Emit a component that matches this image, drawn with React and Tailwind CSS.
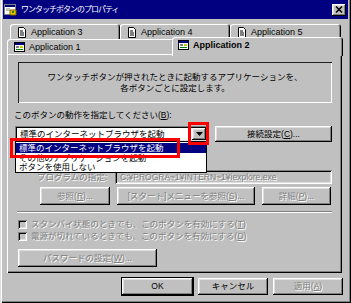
import React from 'react';

const jp = "font-['Liberation_Sans','Noto_Sans_CJK_JP',sans-serif]";
const raised = 'shadow-[inset_-1px_-1px_#000,inset_1px_1px_#fff,inset_-2px_-2px_#808080,inset_2px_2px_#dfdfdf]';
const sunken = 'shadow-[inset_1px_1px_#808080,inset_-1px_-1px_#fff,inset_2px_2px_#000,inset_-2px_-2px_#dfdfdf]';
const grayed = 'text-[#808080] [text-shadow:1px_1px_0_#fff]';

const PageIcon = () => (
  <svg width="10" height="11" viewBox="0 0 10 11" className="shrink-0">
    <path d="M1.5 0.5h5l2 2v8h-7z" fill="#fff" stroke="#000" />
    <path d="M3 4h3M3 6h4M3 8h4" stroke="#000" />
  </svg>
);

const AppIcon = () => (
  <svg width="11" height="10" viewBox="0 0 11 10" className="shrink-0">
    <rect x="0.5" y="0.5" width="10" height="9" fill="#fff" stroke="#000" />
    <rect x="1" y="1" width="9" height="2" fill="#000080" />
    <rect x="2" y="4" width="3" height="2" fill="#808080" />
    <rect x="6" y="4" width="3" height="2" fill="#c8c800" />
    <rect x="2" y="7" width="7" height="1" fill="#008000" />
  </svg>
);

const Key = ({ k }) => <span className="underline underline-offset-1">{k}</span>;

const Tab = ({ label, w, app, selected }) => (
  <div
    className={`${w} ${
      selected ? 'relative z-10 -mt-[2px] -mx-[2px] h-[19px] font-bold pl-[6px]' : 'h-[15px] pl-[7px]'
    } bg-[#c0c0c0] rounded-t-[3px] shadow-[inset_1px_1px_#fff,inset_-1px_0_#000,inset_-2px_0_#808080] flex items-start pt-[3px] gap-[4px] font-['Liberation_Sans',sans-serif] text-[9px] leading-[10px]`}
  >
    {app ? <AppIcon /> : <PageIcon />}
    <span>{label}</span>
  </div>
);

const Btn = ({ w, children, disabled, def }) => (
  <div
    className={`${w} h-full flex items-center justify-center ${raised} ${disabled ? grayed : ''} ${
      def ? 'outline outline-1 outline-black -outline-offset-0' : ''
    }`}
  >
    {children}
  </div>
);

export default function App() {
  return (
    <div
      className={`w-[351px] h-[303px] bg-[#c0c0c0] ${jp} text-[8.5px] text-black px-[3px] flex flex-col overflow-hidden shadow-[inset_1px_0_#dfdfdf,inset_2px_0_#fff,inset_-1px_-1px_#000,inset_-2px_-2px_#808080]`}
    >
      {/* title bar */}
      <div className="h-[19px] bg-[#000080] flex items-center pl-[1px] pr-[2px] shrink-0">
        <svg width="13" height="12" viewBox="0 0 13 12" className="shrink-0">
          <rect x="0.5" y="0.5" width="11" height="10" fill="#fff" stroke="#808080" />
          <rect x="1" y="1" width="10" height="2" fill="#000080" />
          <rect x="2" y="4" width="4" height="3" fill="#c0c0c0" />
          <path d="M6 6h6v5h-6z" fill="#e8d000" stroke="#806000" />
          <path d="M8 7l2 2M10 7l-2 2" stroke="#208000" />
        </svg>
        <span className="ml-[4px] text-white text-[8px] tracking-[-1px] leading-[10px]">ワンタッチボタンのプロパティ</span>
        <div className={`ml-auto w-[14px] h-[12px] bg-[#c0c0c0] ${raised} flex items-center justify-center`}>
          <svg width="8" height="7" viewBox="0 0 8 7">
            <path d="M1 0.5l6 6M7 0.5l-6 6" stroke="#000" strokeWidth="1.5" />
          </svg>
        </div>
      </div>

      {/* tabs + panel */}
      <div className="ml-[4px] mr-[6px] mt-[5px] flex flex-col">
        <div className="flex pl-[3px]">
          <Tab label="Application 3" w="w-[110px]" />
          <Tab label="Application 4" w="w-[110px]" />
          <Tab label="Application 5" w="w-[111px]" />
        </div>
        <div className="flex h-[15px]">
          <Tab label="Application 1" w="w-[167px]" app />
          <Tab label="Application 2" w="w-[171px]" app selected />
        </div>

        <div className="h-[219px] flex flex-col pl-[8px] pr-[10px] shadow-[inset_1px_1px_#fff,inset_-1px_-1px_#000,inset_-2px_-2px_#808080]">
          {/* description */}
          <div className="mt-[8px] ml-[3px] h-[41px] flex flex-col items-center justify-center leading-[11px] text-center shadow-[inset_1px_1px_#202020,inset_-1px_-1px_#fff]">
            <div>ワンタッチボタンが押されたときに起動するアプリケーションを、</div>
            <div>各ボタンごとに設定します。</div>
          </div>

          <div className="mt-[7px] -ml-[1px] h-[11px] leading-[11px]">
            このボタンの動作を指定してください(<Key k="B" />):
          </div>

          {/* combobox row */}
          <div className="mt-[5px] h-[16px] flex gap-[7px] relative z-20">
            <div className={`relative w-[193px] h-full bg-white ${sunken} flex items-center pl-[5px] pr-[2px]`}>
              <span className="leading-[10px]">標準のインターネットブラウザを起動</span>
              <div className={`ml-auto w-[14px] h-[12px] bg-[#c0c0c0] ${raised} flex items-center justify-center`}>
                <svg width="7" height="4" viewBox="0 0 7 4">
                  <path d="M0 0h7L3.5 4z" fill="#000" />
                </svg>
              </div>

              {/* open list */}
              <div className="absolute left-0 top-[15px] w-[192px] h-[32px] bg-white border border-black flex flex-col pt-[1px]">
                <div className="h-[10px] bg-[#000080] text-white leading-[10px] pl-[3px]">標準のインターネットブラウザを起動</div>
                <div className="h-[10px] leading-[10px] pl-[3px]">その他のアプリケーションを起動</div>
                <div className="h-[9px] leading-[9px] pl-[3px]">ボタンを使用しない</div>
              </div>

              {/* red highlights */}
              <div className="absolute -left-[5px] top-[12px] w-[170px] h-[20px] border-[3px] border-[#ff0000]" />
              <div className="absolute left-[173px] -top-[4px] w-[21px] h-[23px] border-[3px] border-[#ff0000]" />
            </div>
            <Btn w="w-[117px]">
              接続設定(<Key k="C" />)...
            </Btn>
          </div>

          {/* program row */}
          <div className="mt-[28px] h-[14px] flex items-center">
            <span className={`ml-[22px] ${grayed}`}>プログラムの指定:</span>
            <div className={`ml-auto w-[217px] h-full ${sunken} flex items-center pl-[5px] ${grayed} font-['Liberation_Sans',sans-serif] text-[8.5px]`}>
              C:¥PROGRA~1¥INTERN~1¥iexplore.exe
            </div>
          </div>

          {/* buttons row */}
          <div className="mt-[3px] h-[18px] flex gap-[7px] ml-[25px]">
            <Btn w="w-[70px]" disabled>
              参照(<Key k="R" />)...
            </Btn>
            <Btn w="w-[138px]" disabled>
              [スタート]メニューを参照(<Key k="S" />)...
            </Btn>
            <Btn w="w-[69px]" disabled>
              詳細(<Key k="P" />)...
            </Btn>
          </div>

          <div className="mt-[6px] ml-[2px] h-[2px] border-t border-[#808080] border-b border-b-white" />

          {/* checkboxes */}
          <div className="mt-[5px] h-[12px] flex items-center gap-[4px] ml-[3px]">
            <div className={`w-[9px] h-[9px] bg-[#c0c0c0] ${sunken}`} />
            <span className={grayed}>スタンバイ状態のときでも、このボタンを有効にする(<Key k="T" />)</span>
          </div>
          <div className="h-[12px] flex items-center gap-[4px] ml-[3px]">
            <div className={`w-[9px] h-[9px] bg-[#c0c0c0] ${sunken}`} />
            <span className={grayed}>電源が切れているときでも、このボタンを有効にする(<Key k="D" />)</span>
          </div>

          <div className="mt-[7px] ml-[3px] h-[18px] flex">
            <Btn w="w-[139px]" disabled>
              パスワードの設定(<Key k="W" />)...
            </Btn>
          </div>
        </div>
      </div>

      {/* bottom buttons */}
      <div className="mt-[5px] h-[17px] flex justify-end gap-[5px] pr-[5px]">
        <Btn w="w-[71px]" def>
          <span className="font-['Liberation_Sans',sans-serif]">OK</span>
        </Btn>
        <Btn w="w-[70px]">キャンセル</Btn>
        <Btn w="w-[70px]" disabled>
          適用(<Key k="A" />)
        </Btn>
      </div>
    </div>
  );
}
